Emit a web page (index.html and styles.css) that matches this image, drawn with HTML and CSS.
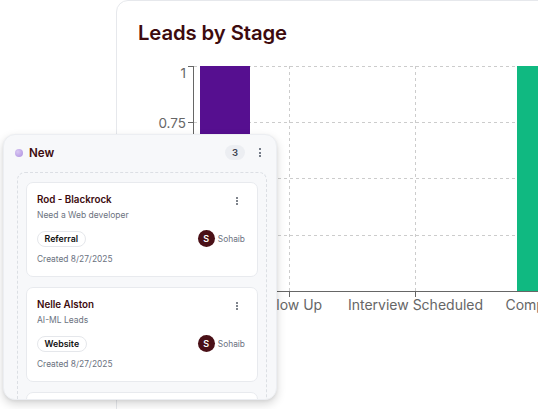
FILE: index.html
```html
<!DOCTYPE html>
<html>
<head>
<meta charset="utf-8">
<link rel="stylesheet" href="styles.css">
</head>
<body>
<div class="page">
  <section class="chart-card">
    <h2 class="chart-title">Leads by Stage</h2>
    <svg class="chart" width="440" height="360" viewBox="117 47 440 360">
      <g class="grid">
        <line x1="194" y1="66.5" x2="560" y2="66.5"/>
        <line x1="194" y1="122.5" x2="560" y2="122.5"/>
        <line x1="194" y1="178.5" x2="560" y2="178.5"/>
        <line x1="194" y1="235.5" x2="560" y2="235.5"/>
        <line x1="289.5" y1="66" x2="289.5" y2="291"/>
        <line x1="415.5" y1="66" x2="415.5" y2="291"/>
        <line x1="541.5" y1="66" x2="541.5" y2="291"/>
      </g>
      <rect class="bar-purple" x="200" y="66" width="50" height="225"/>
      <rect class="bar-green" x="517" y="66" width="50" height="225"/>
      <g class="axis">
        <line x1="193.5" y1="66" x2="193.5" y2="291.5"/>
        <line x1="188" y1="66.5" x2="194" y2="66.5"/>
        <line x1="188" y1="122.5" x2="194" y2="122.5"/>
        <line x1="188" y1="178.5" x2="194" y2="178.5"/>
        <line x1="188" y1="235.5" x2="194" y2="235.5"/>
        <line x1="188" y1="291.5" x2="194" y2="291.5"/>
        <line x1="193" y1="291.5" x2="560" y2="291.5"/>
        <line x1="225.5" y1="291" x2="225.5" y2="297"/>
        <line x1="289.5" y1="291" x2="289.5" y2="297"/>
        <line x1="415.5" y1="291" x2="415.5" y2="297"/>
        <line x1="541.5" y1="291" x2="541.5" y2="297"/>
      </g>
      <g class="ylabels">
        <text x="186" y="77.5">1</text>
        <text x="186" y="128">0.75</text>
        <text x="186" y="183">0.5</text>
        <text x="186" y="240">0.25</text>
        <text x="186" y="296">0</text>
      </g>
      <g class="xlabels">
        <text x="225" y="309.5">New</text>
        <text x="289.5" y="309.5">Follow Up</text>
        <text x="415.5" y="309.5">Interview Scheduled</text>
        <text x="541.5" y="309.5">Completed</text>
      </g>
    </svg>
  </section>

  <section class="column">
    <header class="col-head">
      <span class="dot"></span>
      <span class="col-name">New</span>
      <span class="count">3</span>
      <span class="kebab"><i></i><i></i><i></i></span>
    </header>
    <div class="dropzone">
      <article class="lead">
        <div class="lead-top">
          <h3 class="lead-name">Rod - Blackrock</h3>
          <span class="kebab small"><i></i><i></i><i></i></span>
        </div>
        <p class="lead-desc">Need a Web developer</p>
        <div class="lead-row">
          <span class="tag">Referral</span>
          <span class="owner"><span class="avatar">S</span>Sohaib</span>
        </div>
        <p class="lead-date">Created 8/27/2025</p>
      </article>
      <article class="lead">
        <div class="lead-top">
          <h3 class="lead-name">Nelle Alston</h3>
          <span class="kebab small"><i></i><i></i><i></i></span>
        </div>
        <p class="lead-desc">AI-ML Leads</p>
        <div class="lead-row">
          <span class="tag">Website</span>
          <span class="owner"><span class="avatar">S</span>Sohaib</span>
        </div>
        <p class="lead-date">Created 8/27/2025</p>
      </article>
      <article class="lead">
        <div class="lead-top">
          <h3 class="lead-name">&nbsp;</h3>
        </div>
      </article>
    </div>
  </section>
</div>
</body>
</html>
```

FILE: styles.css
```css
* { box-sizing: border-box; }
html, body {
  margin: 0;
  padding: 0;
  background: #ffffff;
  width: 538px;
  height: 409px;
  overflow: hidden;
  font-family: Inter, "Noto Sans", sans-serif;
}
.page {
  position: relative;
  width: 538px;
  height: 409px;
  overflow: hidden;
  padding-left: 116px;
}
.chart-card {
  width: 460px;
  height: 440px;
  border: 1px solid #e6e8ec;
  border-radius: 12px;
  background: #fff;
  flex: none;
}
.chart-title {
  margin: 0;
  padding: 18px 20px 0 21px;
  height: 46px;
  font-size: 20.3px;
  line-height: 28px;
  font-weight: 600;
  color: #3d0b0e;
  letter-spacing: -0.1px;
}
.chart { display: block; }
.grid line {
  stroke: #cccccc;
  stroke-width: 1;
  stroke-dasharray: 3 3;
}
.axis line {
  stroke: #666666;
  stroke-width: 1;
}
.bar-purple { fill: #560f90; }
.bar-green { fill: #10b981; }
.ylabels text {
  font-family: Inter, sans-serif;
  font-size: 13.5px;
  fill: #666666;
  text-anchor: end;
}
.xlabels text {
  font-family: Inter, sans-serif;
  font-size: 14px;
  fill: #666666;
  text-anchor: middle;
}

/* Kanban column overlay */
.column {
  position: absolute;
  left: 3px;
  top: 134px;
  width: 274px;
  height: 266px;
  background: #f7f8fa;
  border: 1px solid #eceef2;
  border-radius: 12px;
  box-shadow: 0 4px 10px rgba(0, 0, 0, 0.16), 0 1px 3px rgba(0, 0, 0, 0.06);
  overflow: hidden;
  padding: 0 9px 0 13px;
}
.col-head {
  display: flex;
  align-items: center;
  height: 35px;
  margin-left: -2px;
}
.dot {
  width: 8px;
  height: 8px;
  border-radius: 50%;
  background: radial-gradient(circle at 35% 35%, #d9c8f2, #ad8fe0);
  margin-right: 6px;
}
.col-name {
  font-size: 11.6px;
  line-height: 16px;
  font-weight: 600;
  color: #3d0b0e;
  flex: 1;
}
.count {
  width: 20px;
  height: 15px;
  border-radius: 8px;
  background: #eceef2;
  font-size: 9.5px;
  line-height: 15px;
  font-weight: 600;
  text-align: center;
  color: #3a4150;
  margin-right: 11px;
}
.kebab {
  display: flex;
  flex-direction: column;
  align-items: center;
  gap: 1.3px;
  width: 8px;
  margin-right: 3px;
}
.kebab i {
  display: block;
  width: 2px;
  height: 2px;
  border-radius: 50%;
  background: #4b5563;
}
.dropzone {
  margin-top: 2px;
  border: 1px dashed #dcdfe4;
  border-bottom: none;
  border-radius: 8px 8px 0 0;
  padding: 9px 8px 0 8px;
  display: flex;
  flex-direction: column;
  gap: 10px;
  height: 300px;
}
.lead {
  flex: none;
  height: 95px;
  background: #ffffff;
  border: 1px solid #e8eaee;
  border-radius: 7px;
  padding: 9.5px 12px 0 10px;
}
.lead-top {
  display: flex;
  align-items: flex-start;
  justify-content: space-between;
}
.lead-name {
  margin: 0;
  font-size: 9.8px;
  line-height: 14px;
  font-weight: 600;
  color: #3d0b0e;
}
.kebab.small {
  width: 16px;
  margin: 4px 0 0 0;
  gap: 1px;
}
.kebab.small i { background: #555b66; }
.lead-desc {
  margin: 2.5px 0 0 0;
  font-size: 8.5px;
  line-height: 13px;
  color: #6b7280;
}
.lead-row {
  display: flex;
  align-items: center;
  justify-content: space-between;
  margin-top: 8px;
  height: 17px;
}
.tag {
  height: 16px;
  padding: 0 6.5px;
  border: 1px solid #e5e7eb;
  border-radius: 8px;
  font-size: 8.8px;
  line-height: 14px;
  font-weight: 600;
  color: #111111;
}
.owner {
  display: flex;
  align-items: center;
  gap: 3px;
  font-size: 8.4px;
  color: #6b7280;
}
.avatar {
  width: 17px;
  height: 17px;
  border-radius: 50%;
  background: #4a1017;
  color: #ffffff;
  font-size: 9px;
  font-weight: 600;
  line-height: 17px;
  text-align: center;
}
.lead-date {
  margin: 6px 0 0 0;
  font-size: 8.4px;
  line-height: 13px;
  color: #6b7280;
}
```
